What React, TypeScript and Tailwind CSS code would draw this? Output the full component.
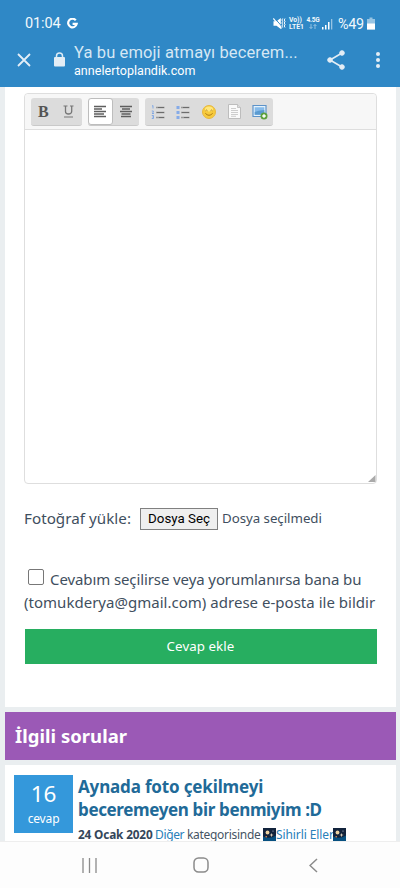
import type { ReactNode } from "react";

const UI_FONT = "font-['Roboto',sans-serif]";

function StatusIcons() {
  return (
    <div className="flex items-center h-[14px]">
      <svg width="13" height="13" viewBox="0 0 13 13" fill="none" stroke="#fff" className="mr-[3px]">
        <path d="M.5 4.300h3L7.800 1v11L3.500 8.700h-3z" fill="#fff" stroke="none" />
        <path d="M1.300.8 9 9.500" stroke="#2f88c6" strokeWidth="1" />
        <path d="M.3 1.500 8.500 11.500" strokeWidth="1.200" />
        <path d="M9.700 1.500 8.900 3l.8 1.500-.8 1.500.8 1.500-.8 1.500.8 1.500M12 1.500l-.8 1.500.8 1.500-.8 1.500.8 1.500-.8 1.500.8 1.500" strokeWidth="1" />
      </svg>
      <div className="w-[17px] text-[6.800px] leading-[6.500px] font-bold whitespace-nowrap">
        <div>Vo))</div>
        <div>LTE1</div>
      </div>
      <div className="w-[14px] text-[6.500px] leading-[6.500px] font-bold text-center whitespace-nowrap">
        <div className="tracking-[-0.200px]">4.5G</div>
        <div className="flex justify-center h-[6.500px] items-center opacity-60">
          <svg width="8" height="5" viewBox="0 0 8 5" fill="none" stroke="#fff" strokeWidth=".8">
            <path d="M2 0v4.500M.5 3 2 4.500 3.500 3M6 5V.5M4.500 2 6 .5 7.500 2" />
          </svg>
        </div>
      </div>
      <svg width="11" height="12" viewBox="0 0 11 12" fill="#fff" className="ml-[2px] mr-[5px]">
        <path d="M0 9h1.500v2.500H0zM3 7h1.500v4.500H3zM6 4h1.500v7.500H6z" />
        <path d="M9 1h1.300v10.500H9z" opacity=".5" />
      </svg>
      <span className="w-[28px] text-[14.300px] tracking-[-0.200px] leading-[14px]">%49</span>
      <svg width="8" height="13" viewBox="0 0 8 13" className="ml-px">
        <path d="M2.500.5h3V2H8v10.500H0V2h2.500z" fill="#fff" opacity=".5" />
        <path d="M0 6.500h8v6H0z" fill="#fff" />
      </svg>
    </div>
  );
}

function BrowserHeader() {
  return (
    <header className={`h-[87px] shrink-0 bg-[#2f88c6] text-[#f2f8fc] ${UI_FONT}`}>
      <div className="flex items-center h-[47px] pl-[25px] pr-[25px]">
        <span className="w-[36px] text-[14.500px] tracking-[-0.100px] leading-4">01:04</span>
        <svg width="11" height="11" viewBox="0 0 11 11" className="ml-[6px] mr-auto" fill="none" stroke="#fff" strokeWidth="2.200">
          <path d="M8.800 2.300A4.300 4.300 0 1 0 9.700 5.900H5.600" />
        </svg>
        <StatusIcons />
      </div>
      <div className="flex h-[40px]">
        <svg width="14" height="14" viewBox="0 0 14 14" className="ml-[17px] mt-[6px]" stroke="#e3eef7" strokeWidth="1.800">
          <path d="m1 1 12 12M13 1 1 13" />
        </svg>
        <svg width="11" height="15" viewBox="0 0 11 15" className="ml-[23px] mt-[5px]">
          <path d="M2.500 7V4a3 3 0 0 1 6 0v3" fill="none" stroke="#dcebf6" strokeWidth="1.500" />
          <rect y="5" width="11" height="9.500" rx="1" fill="#e3edf5" />
        </svg>
        <div className="ml-[9px] w-[240px] whitespace-nowrap">
          <div className="text-[16.500px] leading-[18px] mt-[-3px] tracking-[0.120px] text-[#d5e7f4]">Ya bu emoji atmayı becerem...</div>
          <div className="text-[12.500px] leading-[16px] mt-[1px] tracking-[0.040px] text-white">annelertoplandik.com</div>
        </div>
        <svg width="18" height="20" viewBox="0 0 18 20" className="ml-[13px] mt-[3px]" fill="#e3edf5" stroke="#e3edf5">
          <path d="M15 3 3 10l12 7" fill="none" strokeWidth="1.600" />
          <circle cx="15" cy="3" r="2.300" />
          <circle cx="3" cy="10" r="2.300" />
          <circle cx="15" cy="17" r="2.300" />
        </svg>
        <svg width="4" height="16" viewBox="0 0 4 16" className="ml-[31px] mt-[5px]" fill="#e3edf5">
          <circle cx="2" cy="2" r="2" />
          <circle cx="2" cy="8" r="2" />
          <circle cx="2" cy="14" r="2" />
        </svg>
      </div>
    </header>
  );
}

function ToolGroup({ children }: { children: ReactNode }) {
  return (
    <div className="flex h-[28px] rounded-[3px] bg-[#dcdcdc] border-b border-[#c9c9c9] overflow-hidden">{children}</div>
  );
}

function Tool({ active, children }: { active?: boolean; children: ReactNode }) {
  return (
    <div
      className={`flex items-center justify-center w-[25.600px] h-[27px] rounded-[3px] ${
        active ? "bg-white border border-[#bdbdbd]" : ""
      }`}
    >
      {children}
    </div>
  );
}

function ListIcon({ numbered }: { numbered?: boolean }) {
  return (
    <svg width="14" height="14" viewBox="0 0 14 14">
      <path d="M5 2.500h8.500M5 7.500h8.500M5 12.500h8.500" stroke="#999" strokeWidth="1.500" />
      <path d="M7 2.500h6M6 7.500h7M8 12.500h5" stroke="#6c6c6c" strokeWidth="1" />
      {numbered ? (
        <path d="M1 1.200 2 .5v3M.8 6h1.500v1.300L1 8.500h2M.8 10.500h1.700v3H.8M1.300 12h1" fill="none" stroke="#79a4e4" strokeWidth=".9" />
      ) : (
        <path d="M.5 1h3v3h-3zM.5 6h3v3h-3zM.5 11h3v3h-3z" fill="#85abe8" />
      )}
    </svg>
  );
}

function EditorToolbar() {
  return (
    <div className="flex gap-[6px] h-[36px] pl-[5.500px] pt-[4px] bg-[#f7f7f7] border-b border-[#dedede] rounded-t-[4px]">
      <ToolGroup>
        <Tool>
          <span className="font-['Liberation_Serif',serif] font-bold text-[16px] leading-none text-[#555]">B</span>
        </Tool>
        <Tool>
          <svg width="11" height="13" viewBox="0 0 11 13" fill="none" stroke="#777">
            <path d="M.5 1h4M7 1h3.500M1 12h9" />
            <path d="M2.500 1v5.500Q2.500 9 5.500 9T8.700 6.500V1" strokeWidth="1.300" />
          </svg>
        </Tool>
      </ToolGroup>
      <ToolGroup>
        <Tool active>
          <svg width="12" height="13" viewBox="0 0 12 13" stroke="#5e5e5e" strokeWidth="1.300">
            <path d="M0 1.500h12M0 4h8M0 6.500h12M0 9h10M0 11.500h12" />
          </svg>
        </Tool>
        <Tool>
          <svg width="12" height="13" viewBox="0 0 12 13" stroke="#5e5e5e" strokeWidth="1.300">
            <path d="M0 1.500h12M2 4h8M0 6.500h12M1.500 9h9M1 11.500h10" />
          </svg>
        </Tool>
      </ToolGroup>
      <ToolGroup>
        <Tool>
          <ListIcon numbered />
        </Tool>
        <Tool>
          <ListIcon />
        </Tool>
        <Tool>
          <svg width="14" height="14" viewBox="0 0 14 14">
            <circle cx="7" cy="7" r="6.500" fill="#f7cb3d" stroke="#e6b840" />
            <ellipse cx="7" cy="4" rx="4" ry="2.500" fill="#ffe77c" />
            <path d="M3.600 5.800q1-1.500 1.900 0M8.500 5.800q1-1.500 1.900 0M3.300 8.300q3.700 4 7.400 0" fill="none" stroke="#a97512" strokeWidth=".9" />
          </svg>
        </Tool>
        <Tool>
          <svg width="13" height="15" viewBox="0 0 13 15">
            <path d="M.5.5h9l3 3v11H.5z" fill="#fafafa" stroke="#bdbdbd" />
            <path d="M9.500.5v3h3" fill="#ddd" stroke="#b5b5b5" strokeWidth=".7" />
            <path d="M3 4.500h5M3 6.500h7M3 8.500h7M3 10.500h7M3 12.300h5" stroke="#c2c2c2" strokeWidth=".8" />
          </svg>
        </Tool>
        <Tool>
          <svg width="16" height="16" viewBox="0 0 16 16">
            <path d="M1 1.500h13v11H1z" fill="#e5f2fc" stroke="#5d93c9" strokeWidth="1.200" />
            <path d="M2.700 3.200h9.600v7.600H2.700z" fill="#86bbea" />
            <path d="m2.700 8 4-1.300 5.600-.7v4.800H2.700z" fill="#5b9bd1" />
            <circle cx="12" cy="12" r="3.500" fill="#5da13c" />
            <path d="M12 10.200v3.600M10.200 12h3.600" stroke="#fff" strokeWidth="1.500" />
          </svg>
        </Tool>
      </ToolGroup>
    </div>
  );
}

function AnswerForm() {
  return (
    <section className="h-[620px] shrink-0 bg-white px-[19px] pt-[6px] text-[#3f4f60]">
      <div className="flex flex-col w-[353px] h-[391px] border border-[#dedede] rounded-[4px]">
        <EditorToolbar />
        <div className="flex-1 flex items-end justify-end">
          <svg width="9" height="9" viewBox="0 0 9 9">
            <path d="M8.500 1v7H1z" fill="#aaa" />
          </svg>
        </div>
      </div>
      <div className="flex items-center h-[22px] mt-[24px] whitespace-nowrap">
        <span className="w-[116px] mt-[-2px] text-[15.200px] tracking-[0.030px]">Fotoğraf yükle:</span>
        <button className={`w-[78px] h-[22px] bg-[#efefef] border border-[#808080] text-[13.300px] leading-none text-black ${UI_FONT}`}>
          Dosya Seç
        </button>
        <span className="ml-[4px] text-[13.300px] tracking-[-0.040px]">Dosya seçilmedi</span>
      </div>
      <div className="mt-[38px] text-[15px] leading-[23px] whitespace-nowrap">
        <div className="flex items-center">
          <span className="w-[16px] h-[16px] ml-[4px] mr-[6px] mb-[5px] border border-[#777] rounded-[2px] bg-white" />
          <span className="tracking-[-0.100px]">Cevabım seçilirse veya yorumlanırsa bana bu</span>
        </div>
        <div className="tracking-[0.020px]">(tomukderya@gmail.com) adrese e-posta ile bildir</div>
      </div>
      <button className="block mt-[15px] ml-[0.500px] w-[352px] h-[35px] bg-[#27ae60] text-white text-[13.300px] tracking-[0.080px]">Cevap ekle</button>
    </section>
  );
}

// Night sky picture wrapped around the category name
function NightEmoji() {
  return (
    <svg width="13" height="13" viewBox="0 0 13 13" className="shrink-0">
      <path d="M0 0h13v13H0z" fill="#12233c" />
      <path d="M0 8.500q7 3 13-1V13H0z" fill="#075080" />
      <circle cx="4.500" cy="4.500" r="1.900" fill="#edd2a0" />
      <path d="m8.500 5 .6 1.500 1.600.5-1.600.6-.6 1.600-.6-1.600L6.300 7l1.600-.5z" fill="#d8ccb8" />
      <circle cx="3.200" cy="8.800" r=".8" fill="#ef9851" />
      <circle cx="10" cy="3" r=".6" fill="#c2cedc" />
    </svg>
  );
}

function RelatedQuestion() {
  return (
    <article className="flex h-[76px] bg-white pl-[9px] pt-[10px] overflow-hidden">
      <div className="w-[59px] h-[58px] shrink-0 bg-[#3498db] text-white text-center">
        <div className="text-[22.500px] leading-[24px] pt-[7px]">16</div>
        <div className="text-[12px] leading-[16px] mt-[5px] tracking-[-0.150px]">cevap</div>
      </div>
      <div className="ml-[5px] whitespace-nowrap">
        <h3 className="text-[17px] leading-[23px] font-bold text-[#216a98]">
          <span className="block tracking-[-0.160px]">Aynada foto çekilmeyi</span>
          <span className="block tracking-[-0.360px]">beceremeyen bir benmiyim :D</span>
        </h3>
        <p className="flex items-center mt-[7px] text-[12px] leading-[13px] text-[#465464]">
          <b className="w-[77px] text-[#34465a] text-[11.800px] tracking-[-0.160px]">24 Ocak 2020</b>
          <a className="w-[32px] text-[#2980b9] tracking-[-0.350px]">Diğer</a>
          <span className="w-[76px] tracking-[-0.300px]">kategorisinde</span>
          <NightEmoji />
          <a className="w-[57px] text-[#2980b9] tracking-[-0.100px]">Sihirli Eller</a>
          <NightEmoji />
        </p>
      </div>
    </article>
  );
}

function NavigationBar() {
  return (
    <nav className="flex items-center h-[47px] shrink-0 bg-[#fdfdfd] border-t border-[#eeeeee] pl-[82px]">
      <svg width="15" height="15" viewBox="0 0 15 15" stroke="#8b8b8b" strokeWidth="1.300">
        <path d="M1 0v15M7.500 0v15M14 0v15" />
      </svg>
      <svg width="16" height="16" viewBox="0 0 16 16" className="ml-[96px]" fill="none" stroke="#8b8b8b" strokeWidth="1.500">
        <rect x="1" y="1" width="14" height="14" rx="4.500" />
      </svg>
      <svg width="9" height="15" viewBox="0 0 9 15" className="ml-[100px]" fill="none" stroke="#8b8b8b" strokeWidth="1.500">
        <path d="M8 1 1 7.500 8 14" />
      </svg>
    </nav>
  );
}

export default function App() {
  return (
    <div className="flex flex-col w-[400px] h-[888px] overflow-hidden bg-white font-['Noto_Sans',sans-serif]">
      <BrowserHeader />
      <main className="h-[754px] shrink-0 pl-[5px] pr-[4px] bg-[#eaeef0] overflow-hidden">
        <AnswerForm />
        <h2 className="mt-[5px] h-[48px] pl-[10px] bg-[#9b59b6] text-white text-[18.500px] leading-[47px] font-bold tracking-[0.020px]">
          İlgili sorular
        </h2>
        <div className="mt-[5px]">
          <RelatedQuestion />
        </div>
      </main>
      <NavigationBar />
    </div>
  );
}
